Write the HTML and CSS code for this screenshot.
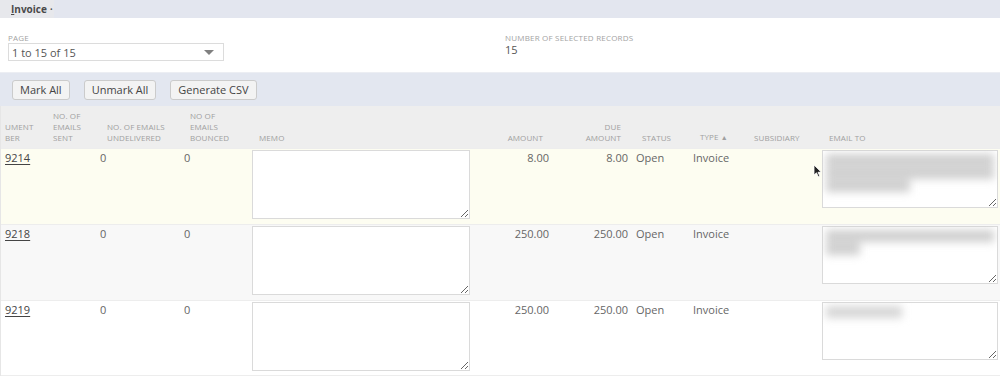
FILE: index.html
```html
<!DOCTYPE html>
<html>
<head>
<meta charset="utf-8">
<link rel="stylesheet" href="styles.css">
</head>
<body>
<div class="tabbar">
  <div class="tab"><span class="tab-title"><u>I</u>nvoice</span><span class="tab-dot">•</span></div>
</div>
<div class="fields">
  <div class="field page-field">
    <div class="label">PAGE</div>
    <div class="select"><span>1 to 15 of 15</span><span class="arrow"></span></div>
  </div>
  <div class="field count-field">
    <div class="label">NUMBER OF SELECTED RECORDS</div>
    <div class="value">15</div>
  </div>
</div>
<div class="buttonbar">
  <button class="btn">Mark All</button>
  <button class="btn">Unmark All</button>
  <button class="btn">Generate CSV</button>
</div>
<div class="grid">
  <div class="row head">
    <div class="c c1 h">UMENT<br>BER</div>
    <div class="c c2 h">NO. OF<br>EMAILS<br>SENT</div>
    <div class="c c3 h">NO. OF EMAILS<br>UNDELIVERED</div>
    <div class="c c4 h">NO OF<br>EMAILS<br>BOUNCED</div>
    <div class="c c5 h">MEMO</div>
    <div class="c c6 h">AMOUNT</div>
    <div class="c c7 h">DUE<br>AMOUNT</div>
    <div class="c c8 h">STATUS</div>
    <div class="c c9 h">TYPE <span class="sort">▲</span></div>
    <div class="c c10 h">SUBSIDIARY</div>
    <div class="c c11 h">EMAIL TO</div>
  </div>

  <div class="row data r1">
    <div class="c c1"><a class="doc">9214</a></div>
    <div class="c c2"></div>
    <div class="c c3">0</div>
    <div class="c c4">0</div>
    <div class="c c5"><textarea class="memo"></textarea></div>
    <div class="c c6">8.00</div>
    <div class="c c7">8.00</div>
    <div class="c c8">Open</div>
    <div class="c c9">Invoice</div>
    <div class="c c10"></div>
    <div class="c c11">
      <div class="emailbox">
        <textarea class="email"></textarea>
        <div class="blur"><div class="bar w-full"></div><div class="bar w-full"></div><div class="bar w-60"></div></div>
      </div>
      <svg class="cursor" width="10" height="14" viewBox="0 0 10 14"><path d="M1 1 L1 11 L3.5 8.8 L5.3 12.8 L6.8 12.1 L5 8.3 L8.2 8.1 Z" fill="#222" stroke="#fff" stroke-width="0.8"/></svg>
    </div>
  </div>

  <div class="row data r2">
    <div class="c c1"><a class="doc">9218</a></div>
    <div class="c c2"></div>
    <div class="c c3">0</div>
    <div class="c c4">0</div>
    <div class="c c5"><textarea class="memo"></textarea></div>
    <div class="c c6">250.00</div>
    <div class="c c7">250.00</div>
    <div class="c c8">Open</div>
    <div class="c c9">Invoice</div>
    <div class="c c10"></div>
    <div class="c c11">
      <div class="emailbox">
        <textarea class="email"></textarea>
        <div class="blur"><div class="bar w-full"></div><div class="bar w-20"></div></div>
      </div>
    </div>
  </div>

  <div class="row data r3">
    <div class="c c1"><a class="doc">9219</a></div>
    <div class="c c2"></div>
    <div class="c c3">0</div>
    <div class="c c4">0</div>
    <div class="c c5"><textarea class="memo"></textarea></div>
    <div class="c c6">250.00</div>
    <div class="c c7">250.00</div>
    <div class="c c8">Open</div>
    <div class="c c9">Invoice</div>
    <div class="c c10"></div>
    <div class="c c11">
      <div class="emailbox">
        <textarea class="email"></textarea>
        <div class="blur"><div class="bar w-40"></div></div>
      </div>
    </div>
  </div>
</div>
</body>
</html>
```
FILE: styles.css
```css
html, body {
  margin: 0;
  padding: 0;
  background: #ffffff;
}
body {
  font-family: "Open Sans", "Liberation Sans", sans-serif;
  font-size: 11px;
  color: #666;
  width: 1000px;
  height: 380px;
  overflow: hidden;
}

.tabbar {
  height: 18px;
  background: #e3e6ef;
  display: flex;
}
.tab {
  width: 54px;
  background: #e7e8ec;
  display: flex;
  align-items: center;
  padding-left: 11px;
  box-sizing: border-box;
  gap: 3px;
}
.tab-title {
  font-weight: 700;
  font-size: 10px;
  color: #4a4a4a;
}
.tab-title u {
  text-decoration-thickness: 1px;
  text-underline-offset: 1px;
}
.tab-dot {
  font-size: 7px;
  color: #555;
}

.fields {
  height: 55px;
  display: flex;
  background: #fff;
  border-bottom: 1px solid #eceef3;
  box-sizing: border-box;
}
.field {
  padding-top: 14px;
}
.page-field {
  padding-left: 8px;
  width: 497px;
}
.label {
  font-size: 8px;
  color: #a3a3a3;
  line-height: 11px;
  letter-spacing: 0.2px;
}
.select {
  width: 216px;
  height: 18px;
  border: 1px solid #dcdcdc;
  box-sizing: border-box;
  display: flex;
  align-items: center;
  justify-content: space-between;
  padding: 0 9px 0 3px;
  font-size: 11px;
  color: #555;
}
.arrow {
  width: 0;
  height: 0;
  border-left: 5px solid transparent;
  border-right: 5px solid transparent;
  border-top: 5px solid #808080;
}
.value {
  font-size: 11px;
  color: #555;
  line-height: 13px;
}

.buttonbar {
  height: 33px;
  background: #e3e7f0;
  display: flex;
  align-items: center;
  gap: 14px;
  padding-left: 12px;
  box-sizing: border-box;
}
.btn {
  font-family: "Open Sans", "Liberation Sans", sans-serif;
  font-size: 11px;
  font-weight: 400;
  color: #444;
  height: 20px;
  padding: 0 7px;
  background: #f3f3f3;
  border: 1px solid #cbcbcb;
  border-radius: 3px;
  line-height: 18px;
}

.grid {
  display: flex;
  flex-direction: column;
  border-left: 1px solid #e6e6e6;
}
.row {
  display: grid;
  grid-template-columns: 48px 50px 82px 68px 227px 77px 78px 58px 57px 70px 184px;
}
.row.head {
  height: 42px;
  background: #eeeeee;
  align-items: end;
}
.c {
  box-sizing: border-box;
  min-width: 0;
}
.h {
  font-size: 8px;
  line-height: 11px;
  color: #a0a0a0;
  padding-bottom: 5px;
  white-space: nowrap;
  letter-spacing: 0.1px;
}
.sort { font-size: 7px; }
.head .c1 { padding-left: 4px; }
.head .c2 { padding-left: 4px; }
.head .c3 { padding-left: 8px; }
.head .c4 { padding-left: 9px; }
.head .c5 { padding-left: 10px; }
.head .c6 { text-align: right; padding-right: 10px; }
.head .c7 { text-align: right; padding-right: 10px; }
.head .c8 { padding-left: 11px; }
.head .c9 { padding-left: 11px; }
.head .c10 { padding-left: 8px; }
.head .c11 { padding-left: 13px; }

.row.data {
  height: 76px;
  border-top: 1px solid #ededed;
  box-sizing: border-box;
  color: #666;
  line-height: 15px;
}
.r1 { background: #fdfdf1; }
.r2 { background: #f8f8f8; }
.r3 { background: #ffffff; border-bottom: 1px solid #ededed; }
.data .c { padding-top: 1px; }
.data .c1 { padding-left: 4px; }
.data .c3 { padding-left: 1px; }
.data .c4 { padding-left: 3px; }
.data .c5 { padding-left: 3px; padding-top: 1px; }
.data .c6 { text-align: right; padding-right: 4px; }
.data .c7 { text-align: right; padding-right: 3px; }
.data .c8 { padding-left: 5px; }
.data .c9 { padding-left: 4px; }
.data .c11 { padding-left: 6px; padding-top: 1px; position: relative; }
.doc {
  color: #444;
  text-decoration: underline;
  text-underline-offset: 2px;
}
textarea {
  display: block;
  margin: 0;
  box-sizing: border-box;
  border: 1px solid #dadada;
  background: #fff;
  border-radius: 0;
  padding: 2px;
  font-family: inherit;
}
.memo {
  width: 218px;
  height: 69px;
}
.emailbox {
  position: relative;
  width: 176px;
  height: 58px;
  overflow: hidden;
}
.email {
  width: 176px;
  height: 58px;
}
.blur {
  position: absolute;
  left: 4px;
  top: 4px;
  right: 4px;
  display: flex;
  flex-direction: column;
  gap: 1px;
  filter: blur(4px);
  pointer-events: none;
}
.bar {
  height: 12px;
  background: #cfcfcf;
}
.w-full { width: 100%; }
.w-60 { width: 50%; }
.w-40 { width: 45%; background: #d6d6d6; }
.w-20 { width: 20%; }
.cursor {
  position: absolute;
  left: -3px;
  top: 15px;
}
```
